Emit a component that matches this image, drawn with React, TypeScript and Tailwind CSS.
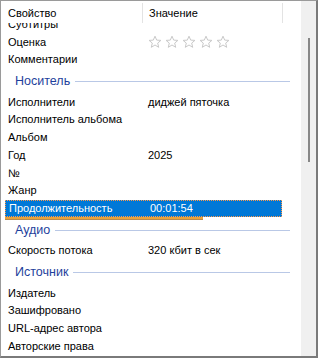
import type React from "react"

type Item =
  | { kind: "row"; label: string; value?: string; stars?: boolean; selected?: boolean }
  | { kind: "group"; label: string }

const items: Item[] = [
  { kind: "row", label: "Оценка", stars: true },
  { kind: "row", label: "Комментарии" },
  { kind: "group", label: "Носитель" },
  { kind: "row", label: "Исполнители", value: "диджей пяточка" },
  { kind: "row", label: "Исполнитель альбома" },
  { kind: "row", label: "Альбом" },
  { kind: "row", label: "Год", value: "2025" },
  { kind: "row", label: "№" },
  { kind: "row", label: "Жанр" },
  { kind: "row", label: "Продолжительность", value: "00:01:54", selected: true },
  { kind: "group", label: "Аудио" },
  { kind: "row", label: "Скорость потока", value: "320 кбит в сек" },
  { kind: "group", label: "Источник" },
  { kind: "row", label: "Издатель" },
  { kind: "row", label: "Зашифровано" },
  { kind: "row", label: "URL-адрес автора" },
  { kind: "row", label: "Авторские права" },
]

const Star: React.FC = () => (
  <svg width="14" height="14" viewBox="0 0 14 14" className="shrink-0">
    <path
      d="M7 1.2 L8.7 5.1 L12.9 5.4 L9.7 8.1 L10.7 12.3 L7 10 L3.3 12.3 L4.3 8.1 L1.1 5.4 L5.3 5.1 Z"
      fill="none"
      stroke="#c9c9c9"
      strokeWidth="1"
      strokeLinejoin="round"
    />
  </svg>
)

const Row: React.FC<{ item: Extract<Item, { kind: "row" }> }> = ({ item }) => {
  if (item.selected) {
    return (
      <div className="relative h-[17.75px] flex">
        <div className="ml-[4px] w-[277px] flex items-center bg-[#0078d7] border border-dotted border-[#ff9a4a] text-white">
          <div className="w-[137px] pl-[3px]">{item.label}</div>
          <div className="pl-[7px]">{item.value}</div>
        </div>
        <div className="absolute left-[4px] top-[17px] w-[198px] h-[3px] bg-[#e9a23b] border-b border-[#b98a4c]" />
      </div>
    )
  }
  return (
    <div className="h-[17.75px] flex items-center">
      <div className="w-[141px] pl-[7px] whitespace-nowrap">{item.label}</div>
      <div className="pl-[6px] flex items-center gap-[3px]">
        {item.stars ? (
          <>
            <Star />
            <Star />
            <Star />
            <Star />
            <Star />
          </>
        ) : (
          item.value
        )}
      </div>
    </div>
  )
}

const Group: React.FC<{ label: string }> = ({ label }) => (
  <div className="h-[24.5px] flex items-center pl-[14px] pr-[11px] pt-[2px]">
    <span className="text-[#1e3f9c] text-[12.5px]">{label}</span>
    <div className="flex-1 ml-[5px] h-px bg-[#b9c8e6]" />
  </div>
)

export default function App() {
  return (
    <div
      className="w-[318px] h-[358px] flex bg-white border-t border-l border-t-[#9a9a9a] border-l-[#9a9a9a] border-r-2 border-b-2 border-r-[#7a7a7a] border-b-[#7a7a7a] text-[11px] text-black overflow-hidden"
      style={{ fontFamily: '"Liberation Sans", Arial, sans-serif' }}
    >
      <div className="w-[300px] flex flex-col overflow-hidden">
        <div className="h-[22px] shrink-0 flex bg-white pt-[2px]">
          <div className="w-[141px] pl-[7px] flex items-center">Свойство</div>
          <div className="w-px bg-[#e3e3e3]" />
          <div className="w-[139px] pl-[6px] flex items-center">Значение</div>
          <div className="w-px bg-[#e3e3e3]" />
        </div>
        {/* list scrolled: previous row only shows its bottom edge */}
        <div className="flex-1 overflow-hidden">
          <div className="h-[10px] overflow-hidden flex flex-col justify-end">
            <div className="h-[17.75px] shrink-0 flex items-center pl-[7px]">Субтитры</div>
          </div>
          <div className="flex flex-col">
            {items.map((item, i) =>
              item.kind === "group" ? <Group key={i} label={item.label} /> : <Row key={i} item={item} />
            )}
          </div>
        </div>
      </div>
      <div className="w-[15px] bg-[#f0f0f0] flex justify-center pt-[37px] pb-[1px]">
        <div className="w-[2px] h-[124px] bg-[#878787] ml-[1px]" />
      </div>
    </div>
  )
}
